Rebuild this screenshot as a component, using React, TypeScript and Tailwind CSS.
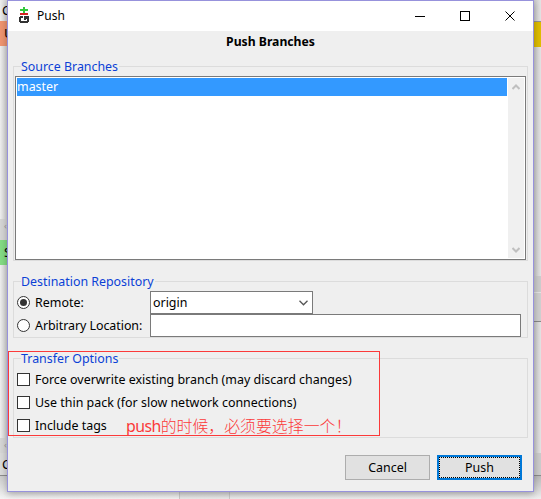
import type { ReactNode } from 'react';

function Group({ title, className, children }: { title: string; className: string; children: ReactNode }) {
  return (
    <section className={`relative mx-[5px] shrink-0 border border-[#dcdcdc] pt-[9px] ${className}`}>
      <h2 className="absolute left-[7px] -top-[9px] h-[18px] bg-[#efefef] pr-px text-[12.4px] leading-[18px] whitespace-nowrap text-[#0b3fd6]">
        {title}
      </h2>
      {children}
    </section>
  );
}

function Radio({ checked }: { checked?: boolean }) {
  return (
    <span className="flex size-[13px] shrink-0 items-center justify-center rounded-full border border-[#333] bg-white">
      {checked && <span className="size-[7px] rounded-full bg-[#333]" />}
    </span>
  );
}

function CheckRow({ label }: { label: string }) {
  return (
    <div className="flex h-[23px] items-center pl-[3px]">
      <span className="size-[13px] shrink-0 border border-[#333] bg-white" />
      <span className="ml-[5px] pt-[2px] whitespace-nowrap">{label}</span>
    </div>
  );
}

function Backdrop() {
  return (
    <div className="flex h-[499px] w-[541px] flex-col">
      <div className="flex h-[475px] justify-between">
        <div className="flex w-[8px] flex-col overflow-hidden bg-gradient-to-r from-[#efefef] to-[#cfcfcf]">
          <div className="h-[21px] pl-[2px] text-[13px] leading-[21px]">C</div>
          <div className="h-[25px] bg-[#ef9470] pl-[4px] text-[13px] leading-[25px]">U</div>
          <div className="h-[173px]" />
          <div className="h-[21px] bg-[#d6d6d6] pl-[4px] text-[9px] leading-[14px] text-[#999]">‹</div>
          <div className="h-[25px] bg-[#84dc84] pl-[4px] text-[13px] leading-[25px]">S</div>
          <div className="h-[173px]" />
          <div className="h-[15px] bg-[#d6d6d6] pl-[4px] text-[9px] leading-[14px] text-[#999]">‹</div>
          <div className="h-[22px] bg-[#dadada] pl-[2px] text-[13px] leading-[23px]">C</div>
        </div>
        <div className="flex w-[8px] flex-col bg-gradient-to-r from-[#c9c9c9] to-[#e4e4e4]">
          <div className="h-[21px]" />
          <div className="h-[26px] border-t border-[#929292] bg-[#dfbd00]" />
          <div className="h-[229px]" />
          <div className="h-[16px] bg-[#cdcdcd]" />
          <div className="h-[30px] border-t border-b border-t-[#e5e5e5] border-b-[#888] bg-[#d0d0d0]" />
          <div className="h-[131px]" />
          <div className="h-[22px] bg-[#cccccc]" />
        </div>
      </div>
      <div className="h-px bg-[#8c8c8c]" />
      <div className="flex h-[23px]">
        <div className="w-[180px] border-r border-[#cccccc] bg-gradient-to-b from-[#cccccc] to-[#f5f5f5]" />
        <div className="w-[50px] border-r border-[#cccccc] bg-gradient-to-b from-[#bbbbbb] to-[#ececec]" />
        <div className="flex-1 bg-gradient-to-b from-[#bbbbbb] to-[#efefef]" />
      </div>
    </div>
  );
}

export default function App() {
  return (
    <div className="relative h-[499px] w-[541px] overflow-hidden bg-[#e9e9e9] font-['Noto_Sans','Noto_Sans_CJK_SC',sans-serif] text-[12.45px] text-black">
      <Backdrop />
      <main className="absolute top-0 left-[7px] flex h-[492px] w-[527px] flex-col border border-[#9792dc] bg-[#efefef] shadow-[0_2px_7px_rgba(0,0,0,0.3)]">
        <header className="flex h-[30px] shrink-0 items-center bg-white">
          <svg className="mb-[2px] ml-[11px]" width="11" height="16" viewBox="0 0 11 16" shapeRendering="crispEdges">
            <path d="M4 0h2v2h3v2H6v2H4V4H1V2h3z" fill="#32c83c" />
            <path d="M1 6h8v2H1z" fill="#d42020" />
            <path d="M1 9h3v2H2v3h6v-2H7v1H5V9h5v6H9v1H1v-1H0v-5h1z" fill="#333" />
          </svg>
          <span className="ml-[7px] text-[12px]">Push</span>
          <svg className="ml-auto mr-[17px]" width="102" height="12" viewBox="0 0 102 12" fill="none" stroke="#000">
            <path d="M1 6.5h10M46.5 1.5h9v9h-9z" shapeRendering="crispEdges" />
            <path d="M91.5 1.5l9 9M100.5 1.5l-9 9" />
          </svg>
        </header>

        <h1 className="h-[35px] shrink-0 pt-px text-center text-[12.2px] leading-[20px] font-bold">Push Branches</h1>

        <Group title="Source Branches" className="h-[195px]">
          <div className="mx-px flex h-[184px] border border-[#7a7a7a] bg-white p-px">
            <div className="mr-px flex-1">
              <div className="h-[18px] bg-[#3399ff] leading-[18px] text-white">master</div>
            </div>
            <div className="flex h-[180px] w-[16px] flex-col items-center justify-between bg-[#f0f0f0] py-[6px]">
              <svg width="8" height="6" viewBox="0 0 8 6" fill="none" stroke="#bfbfbf" strokeWidth="2">
                <path d="M.5 5L4 1.5 7.5 5" />
              </svg>
              <svg className="mb-[-1px]" width="8" height="6" viewBox="0 0 8 6" fill="none" stroke="#bfbfbf" strokeWidth="2">
                <path d="M.5 1L4 4.5 7.5 1" />
              </svg>
            </div>
          </div>
        </Group>

        <Group title="Destination Repository" className="mt-[20px] h-[57px]">
          <div className="flex h-[23px] items-center pl-[3px]">
            <Radio checked />
            <span className="ml-[5px] w-[115px] pt-[2px]">Remote:</span>
            <div className="flex h-[23px] w-[163px] items-center justify-between border border-[#7a7a7a] bg-white pr-[4px] pl-[2px]">
              <span className="pt-[2px]">origin</span>
              <svg width="9" height="6" viewBox="0 0 9 6" fill="none" stroke="#555" strokeWidth="1.3">
                <path d="M.5 .8l4 4 4-4" />
              </svg>
            </div>
          </div>
          <div className="flex h-[23px] items-center pl-[3px]">
            <Radio />
            <span className="ml-[5px] w-[115px] pt-[2px] tracking-[-0.05px] whitespace-nowrap">Arbitrary Location:</span>
            <div className="h-[23px] w-[371px] border border-[#7a7a7a] bg-white" />
          </div>
        </Group>

        <Group title="Transfer Options" className="mt-[20px] h-[80px]">
          <CheckRow label="Force overwrite existing branch (may discard changes)" />
          <CheckRow label="Use thin pack (for slow network connections)" />
          <CheckRow label="Include tags" />
        </Group>

        <footer className="mt-[17px] mr-[11px] flex justify-end gap-[7px]">
          <button className="h-[25px] w-[85px] border border-[#adadad] bg-[#e1e1e1] pt-[2px]">Cancel</button>
          <button className="h-[25px] w-[85px] border-2 border-[#0078d7] bg-[#e1e1e1]">
            <span className="flex h-full items-center justify-center border border-dotted border-black pt-[2px]">Push</span>
          </button>
        </footer>
      </main>

      <div className="absolute top-[351px] left-[8px] h-[85px] w-[372px] border border-[#fb3a3a]" />
      <p className="absolute top-[414px] left-[126px] text-[15.9px] leading-[24px] whitespace-nowrap text-[#fb3a3a]">
        <span className="tracking-[-0.6px]">push</span>
        <span className="font-light">的时候，必须要选择一个！</span>
      </p>
    </div>
  );
}
